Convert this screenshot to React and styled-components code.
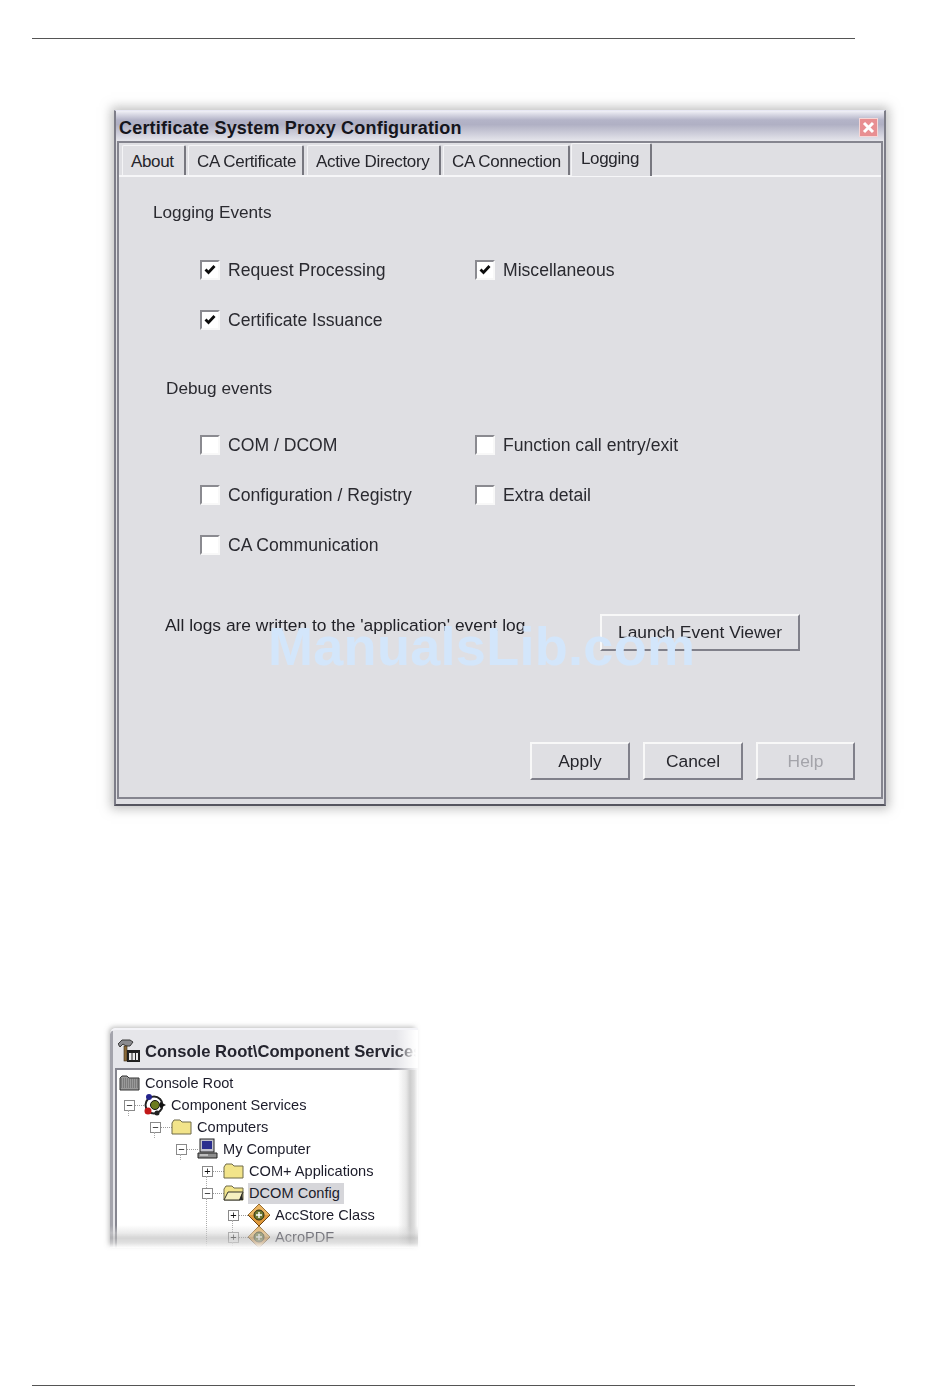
import React from 'react'
import styled, { createGlobalStyle } from 'styled-components'

const GlobalStyle = createGlobalStyle`
  html, body {
    margin: 0;
    padding: 0;
    background: #fff;
    font-family: "Liberation Sans", Arial, sans-serif;
  }
`

const Page = styled.div`
  position: relative;
  width: 950px;
  height: 1398px;
  overflow: hidden;
  background: #fff;
  display: flex;
  flex-direction: column;
`

const Rule = styled.div`
  width: 823px;
  height: 1px;
  margin: ${(p) => p.$top}px 0 0 32px;
  background: #555;
  flex: none;
`

const Dialog = styled.div`
  width: 772px;
  height: 696px;
  box-sizing: border-box;
  margin: 71px 0 0 114px;
  flex: none;
  display: flex;
  flex-direction: column;
  background: #dfdfe3;
  border: 2px solid #7d7d88;
  border-top: 1px solid #e8e8f4;
  border-bottom: 2px solid #55555f;
  padding-bottom: 5px;
  box-shadow: 0 0 10px 3px rgba(130, 130, 130, 0.5);
  filter: blur(0.35px);
`

const TitleBar = styled.div`
  height: 30px;
  flex: none;
  display: flex;
  align-items: center;
  justify-content: space-between;
  padding: 5px 6px 0 3px;
  box-sizing: border-box;
  background: linear-gradient(#f0f0f6 0%, #b4b4c8 30%, #b0b0c4 45%, #e6e6ec 100%);
`

const Title = styled.div`
  font-size: 18px;
  font-weight: 700;
  color: #15151c;
  letter-spacing: 0.2px;
`

const CloseBox = styled.div`
  width: 19px;
  height: 19px;
  margin-top: -3px;
  background: #e88f92;
  border: 1px solid #f6d6d6;
  box-sizing: border-box;
  display: flex;
  align-items: center;
  justify-content: center;
`

const Frame = styled.div`
  flex: 1;
  margin: 0 1px;
  display: flex;
  flex-direction: column;
  min-height: 0;
  border: 2px solid #85858f;
`

const TabStrip = styled.div`
  height: 32px;
  flex: none;
  display: flex;
  padding-left: 3px;
  background: #dfdfe3;
`

const Tab = styled.div`
  position: relative;
  z-index: 1;
  width: ${(p) => p.$width}px;
  box-sizing: border-box;
  flex: none;
  margin-right: ${(p) => p.$gap}px;
  margin-top: ${(p) => (p.$active ? 0 : 2)}px;
  padding: ${(p) => (p.$active ? '3px 0 0 9px' : '4px 0 0 8px')};
  height: ${(p) => (p.$active ? 33 : 30)}px;
  font-size: 17px;
  letter-spacing: -0.35px;
  line-height: 24px;
  color: #26262c;
  white-space: nowrap;
  background: #dfdfe3;
  border-top: 1px solid #f4f4f6;
  border-right: 2px solid #77777f;
  border-left: 1px solid #f4f4f6;
  border-radius: 2px 2px 0 0;
`

const Panel = styled.div`
  flex: 1;
  display: flex;
  flex-direction: column;
  min-height: 0;
  border-top: 2px solid #f6f6f8;
`

const GroupHeading = styled.div`
  margin: ${(p) => p.$top}px 0 0 ${(p) => p.$left}px;
  font-size: 17.2px;
  line-height: 22px;
  color: #2a2a30;
`

const CheckGrid = styled.div`
  margin: ${(p) => p.$top}px 0 0 81px;
  display: grid;
  grid-template-columns: 275px auto;
  grid-auto-rows: 50px;
`

const CheckRow = styled.div`
  display: flex;
  align-items: center;
  gap: 8px;
`

const Box = styled.div`
  width: 20px;
  height: 20px;
  box-sizing: border-box;
  flex: none;
  background: #fff;
  border: 2px solid;
  border-color: #8a8a90 #f8f8f8 #f8f8f8 #8a8a90;
  display: flex;
  align-items: center;
  justify-content: center;
`

const CheckLabel = styled.span`
  font-size: 17.6px;
  line-height: 22px;
  color: #2a2a30;
  white-space: nowrap;
`

const LogRow = styled.div`
  margin: 44px 0 0 46px;
  display: grid;
  grid-template-columns: 435px auto;
  align-items: start;
`

const LogText = styled.div`
  font-size: 17.4px;
  line-height: 22px;
  color: #222228;
  white-space: nowrap;
`

const PushButton = styled.div`
  width: ${(p) => p.$width}px;
  height: ${(p) => p.$height}px;
  box-sizing: border-box;
  display: flex;
  align-items: center;
  justify-content: center;
  font-size: 17.4px;
  color: ${(p) => (p.$disabled ? '#a4a4aa' : '#26262c')};
  background: #dfdfe3;
  border: 2px solid;
  border-color: #f8f8f8 #80808a #80808a #f8f8f8;
`

const ButtonRow = styled.div`
  margin-top: auto;
  padding: 0 26px 17px 0;
  display: flex;
  justify-content: flex-end;
  gap: 13px;
`

const Watermark = styled.div`
  position: absolute;
  left: 268px;
  top: 616px;
  font-size: 54px;
  line-height: 60px;
  font-weight: 700;
  letter-spacing: 0.3px;
  color: #d3e6fb;
  white-space: nowrap;
  filter: blur(0.5px);
`

const ConsoleWindow = styled.div`
  position: relative;
  width: 308px;
  height: 220px;
  box-sizing: border-box;
  margin: 222px 0 0 110px;
  padding-left: 3px;
  flex: none;
  overflow: hidden;
  background: linear-gradient(to right, #a4a4ac 3px, #e6e6ea 3px);
  border-top: 2px solid #f4f4f8;
  border-radius: 6px 0 0 0;
  box-shadow: -2px -2px 5px -1px rgba(120, 120, 120, 0.5);
  display: flex;
  flex-direction: column;
  filter: blur(0.35px);

  &::after {
    content: '';
    position: absolute;
    z-index: 3;
    left: 0;
    right: 0;
    bottom: 0;
    height: 24px;
    pointer-events: none;
    background: linear-gradient(
      to top,
      #fff 0,
      rgba(215, 215, 215, 0.75) 5px,
      rgba(185, 185, 185, 0.6) 10px,
      rgba(215, 215, 215, 0.5) 15px,
      rgba(255, 255, 255, 0) 23px
    );
  }
`

const ConsoleTitle = styled.div`
  position: relative;
  height: 38px;
  flex: none;
  display: flex;
  align-items: center;
  gap: 5px;
  padding: 6px 0 0 5px;
  box-sizing: border-box;
  overflow: hidden;
  font-size: 16.6px;
  font-weight: 700;
  color: #24242e;
  white-space: nowrap;

  &::after {
    content: '';
    position: absolute;
    top: 0;
    bottom: 0;
    right: 0;
    width: 22px;
    background: linear-gradient(to left, #fff 2px, rgba(255, 255, 255, 0));
  }
`

const TitleGlyph = styled.div`
  width: 22px;
  height: 24px;
  flex: none;
  margin-top: -2px;
`

const TreePane = styled.div`
  position: relative;
  flex: 1;
  margin-left: 2px;
  overflow: hidden;
  background: #fff;
  border-top: 2px solid #85858f;
  border-left: 2px solid #85858f;
  border-image: linear-gradient(to right, #85858f 90%, #fff) 1;
  padding: 2px 0 0 2px;
`

const TreeRow = styled.div`
  height: 22px;
  display: flex;
  align-items: center;
  padding-left: ${(p) => (p.$depth ? 26 * p.$depth - 20 : 0)}px;
`

const ExpanderCell = styled.div`
  width: 20px;
  height: 22px;
  flex: none;
  display: flex;
  align-items: center;
`

const Expander = styled.div`
  position: relative;
  width: 9px;
  height: 9px;
  margin-left: -1px;
  border: 1px solid #8a8a8a;
  background: #fff;
  display: flex;
  align-items: center;
  justify-content: center;
  font-size: 11px;
  line-height: 9px;
  color: #111;
  flex: none;

  &::after {
    content: '';
    position: absolute;
    left: 3px;
    top: 100%;
    height: ${(p) => p.$guide}px;
    border-left: 1px dotted #aaa;
  }
`

const Connector = styled.div`
  width: 11px;
  border-top: 1px dotted #999;
  flex: none;
`

const IconCell = styled.div`
  width: ${(p) => (p.$wide ? 28 : 26)}px;
  margin-left: ${(p) => (p.$wide ? -2 : 0)}px;
  height: 22px;
  flex: none;
  display: flex;
  align-items: center;
`

const TreeLabel = styled.span`
  font-size: 14.6px;
  line-height: 21px;
  padding: 0 4px 0 1px;
  margin-left: -1px;
  color: #1c1c2a;
  white-space: nowrap;
  background: ${(p) => (p.$selected ? '#d6d6da' : 'transparent')};
`

const RightFade = styled.div`
  position: absolute;
  z-index: 2;
  inset: 0;
  pointer-events: none;
  background: linear-gradient(
    to left,
    #fff 0,
    rgba(215, 215, 215, 0.85) 4px,
    rgba(192, 192, 192, 0.8) 8px,
    rgba(222, 222, 222, 0.7) 12px,
    rgba(255, 255, 255, 0) 20px
  );
`

const CheckMark = () => (
  <svg width="14" height="14" viewBox="0 0 14 14">
    <path d="M2.5 6.5 L5.5 9.5 L11.5 3" fill="none" stroke="#0c0c0c" strokeWidth="2.8" />
  </svg>
)

const Check = ({ label, checked }) => (
  <CheckRow>
    <Box>{checked && <CheckMark />}</Box>
    <CheckLabel>{label}</CheckLabel>
  </CheckRow>
)

const CloseIcon = () => (
  <svg width="13" height="13" viewBox="0 0 13 13">
    <path d="M2 2 L11 11 M11 2 L2 11" stroke="#fff" strokeWidth="3" />
  </svg>
)

const FolderIcon = ({ open }) => (
  <svg width="21" height="16" viewBox="0 0 21 16">
    <path d="M1 4 L3 1 H9 L11 3 H20 V15 H1 Z" fill="#f2e48a" stroke="#6e6a4a" />
    {open && <path d="M1 15 L5 7 H20 L17 15 Z" fill="#f6f0c0" stroke="#33332a" />}
    {open && <path d="M19 8 L16 15 H20 Z" fill="#2a2a2a" />}
  </svg>
)

const RootIcon = () => (
  <svg width="21" height="16" viewBox="0 0 21 16">
    <path d="M1 3 L3 1 H8 L10 3 H20 V15 H1 Z" fill="#9a9a9a" stroke="#333" />
    <path d="M2 4 H19 M2 6 H19 M2 8 H19 M2 10 H19 M2 12 H19" stroke="#5c5c5c" strokeDasharray="1 1" />
  </svg>
)

const ComputerIcon = () => (
  <svg width="21" height="22" viewBox="0 0 21 22">
    <rect x="3" y="1" width="14" height="13" fill="#c4c4cc" stroke="#222" />
    <rect x="5" y="3" width="10" height="8" fill="#2b2f8e" />
    <path d="M1 15 H20 V20 H1 Z" fill="#8e8e8e" stroke="#222" />
    <path d="M3 17 H11" stroke="#eee" />
  </svg>
)

const ServicesIcon = () => (
  <svg width="24" height="24" viewBox="0 0 24 24">
    <circle cx="11" cy="12" r="8.5" fill="#fff" stroke="#222" strokeWidth="2" />
    <circle cx="6" cy="4" r="3" fill="#24248c" />
    <circle cx="5" cy="18" r="3.5" fill="#c21818" />
    <circle cx="12" cy="12" r="4.5" fill="#6c7c20" stroke="#111" />
    <path d="M17 9 L23 12 L17 15 Z" fill="#111" />
    <circle cx="14" cy="20" r="2.5" fill="#222" />
  </svg>
)

const ComponentIcon = () => (
  <svg width="24" height="24" viewBox="0 0 24 24">
    <path d="M12 1 L23 12 L12 23 L1 12 Z" fill="#e09a3c" stroke="#6a4212" />
    <path d="M12 1 L23 12 H1 Z" fill="#f0c070" opacity="0.7" />
    <circle cx="12" cy="12" r="5" fill="#6f7a34" stroke="#2a2a12" />
    <path d="M12 9 V15 M9 12 H15" stroke="#fff" strokeWidth="1.4" />
  </svg>
)

const HammerIcon = () => (
  <svg width="22" height="24" viewBox="0 0 22 24">
    <path d="M0 5 L4 1 H12 L15 3 L12 7 H8 L5 5 L2 8 Z" fill="#8a8a8e" stroke="#3a3a3a" />
    <rect x="6" y="7" width="3" height="15" fill="#8a6a3a" stroke="#3a2a12" strokeWidth="0.6" />
    <rect x="9" y="11" width="13" height="12" fill="#1e1e1e" />
    <path d="M10.5 13.5 H20.5 V21.5 H10.5 Z M14 13.5 V21.5 M17.5 13.5 V21.5" fill="#ececec" stroke="#222" />
  </svg>
)

const treeItems = [
  { depth: 0, label: 'Console Root', icon: <RootIcon /> },
  { depth: 1, label: 'Component Services', icon: <ServicesIcon />, wide: true, mark: '−', guide: 6 },
  { depth: 2, label: 'Computers', icon: <FolderIcon />, mark: '−', guide: 6 },
  { depth: 3, label: 'My Computer', icon: <ComputerIcon />, mark: '−', guide: 6 },
  { depth: 4, label: 'COM+ Applications', icon: <FolderIcon />, mark: '+', guide: 12 },
  { depth: 4, label: 'DCOM Config', icon: <FolderIcon open />, mark: '−', guide: 50, selected: true },
  { depth: 5, label: 'AccStore Class', icon: <ComponentIcon />, wide: true, mark: '+', guide: 12 },
  { depth: 5, label: 'AcroPDF', icon: <ComponentIcon />, wide: true, mark: '+', guide: 12 },
]

export default function App() {
  return (
    <Page>
      <GlobalStyle />
      <Rule $top={38} />

      <Dialog>
        <TitleBar>
          <Title>Certificate System Proxy Configuration</Title>
          <CloseBox><CloseIcon /></CloseBox>
        </TitleBar>
        <Frame>
          <TabStrip>
            <Tab $width={64} $gap={2}>About</Tab>
            <Tab $width={116} $gap={3}>CA Certificate</Tab>
            <Tab $width={134} $gap={2}>Active Directory</Tab>
            <Tab $width={127} $gap={1}>CA Connection</Tab>
            <Tab $width={81} $gap={0} $active>Logging</Tab>
          </TabStrip>
          <Panel>
            <GroupHeading $top={24} $left={34}>Logging Events</GroupHeading>
            <CheckGrid $top={22}>
              <Check label="Request Processing" checked />
              <Check label="Miscellaneous" checked />
              <Check label="Certificate Issuance" checked />
            </CheckGrid>
            <GroupHeading $top={32} $left={47}>Debug events</GroupHeading>
            <CheckGrid $top={21}>
              <Check label="COM / DCOM" />
              <Check label="Function call entry/exit" />
              <Check label="Configuration / Registry" />
              <Check label="Extra detail" />
              <Check label="CA Communication" />
            </CheckGrid>
            <LogRow>
              <LogText>All logs are written to the 'application' event log</LogText>
              <PushButton $width={200} $height={37}>Launch Event Viewer</PushButton>
            </LogRow>
            <ButtonRow>
              <PushButton $width={100} $height={38}>Apply</PushButton>
              <PushButton $width={100} $height={38}>Cancel</PushButton>
              <PushButton $width={99} $height={38} $disabled>Help</PushButton>
            </ButtonRow>
          </Panel>
        </Frame>
      </Dialog>

      <ConsoleWindow>
        <ConsoleTitle>
          <TitleGlyph><HammerIcon /></TitleGlyph>
          Console Root\Component Services
        </ConsoleTitle>
        <TreePane>
          {treeItems.map((item) => (
            <TreeRow key={item.label} $depth={item.depth}>
              {item.mark && (
                <ExpanderCell>
                  <Expander $guide={item.guide}>{item.mark}</Expander>
                  <Connector />
                </ExpanderCell>
              )}
              <IconCell $wide={item.wide}>{item.icon}</IconCell>
              <TreeLabel $selected={item.selected}>{item.label}</TreeLabel>
            </TreeRow>
          ))}
          <RightFade />
        </TreePane>
      </ConsoleWindow>

      <Rule $top={137} />
      <Watermark>ManualsLib.com</Watermark>
    </Page>
  )
}
